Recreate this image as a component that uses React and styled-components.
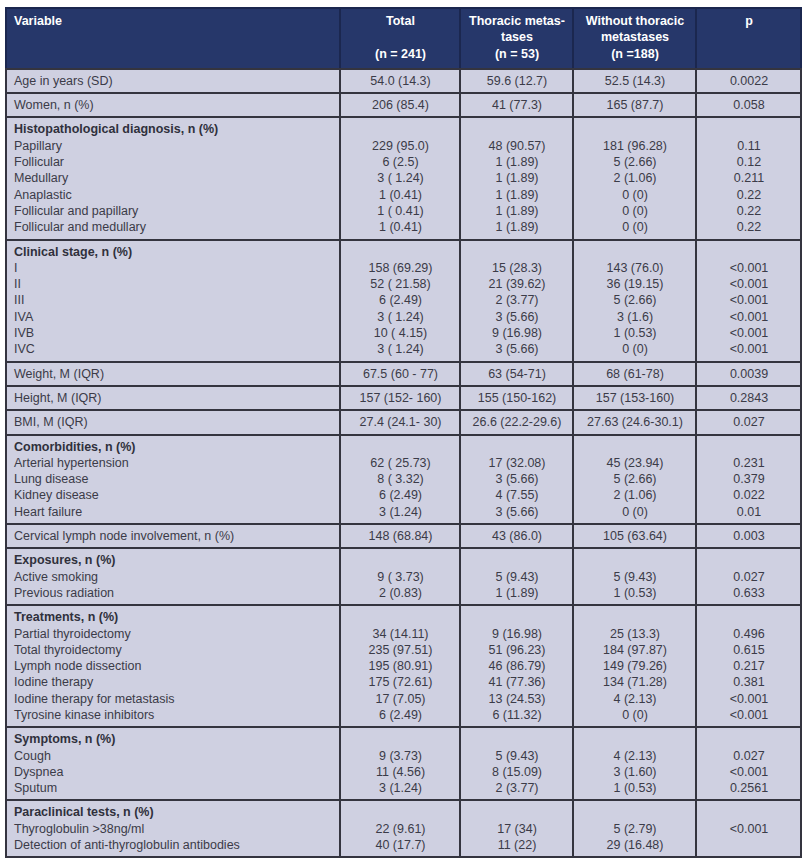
import styled, { createGlobalStyle } from 'styled-components';

const GlobalStyle = createGlobalStyle`
  body {
    margin: 0;
    padding: 7px 5px;
    background: #ffffff;
    font-family: "Liberation Sans", Arial, sans-serif;
  }
`;

const Table = styled.table`
  width: 795px;
  border-collapse: collapse;
  table-layout: fixed;
  font-size: 12.5px;
  line-height: 16.3px;
  color: #3b3b48;
  background: #cfd0e1;
  border: 2px solid #34343f;
`;

const HeadCell = styled.th`
  background: #26376a;
  color: #ffffff;
  font-weight: bold;
  text-align: ${(p) => (p.$left ? 'left' : 'center')};
  vertical-align: top;
  padding: 4px 6px 6px 7px;
  border: 2px solid #1b274f;
  border-bottom-color: #34343f;
`;

const Cell = styled.td`
  text-align: ${(p) => (p.$left ? 'left' : 'center')};
  vertical-align: top;
  padding: 3px 6px 3px 7px;
  border: 2px solid #34343f;
  white-space: nowrap;
`;

const Line = styled.div`
  min-height: 16.3px;
  font-weight: ${(p) => (p.$bold ? 'bold' : 'inherit')};
  color: ${(p) => (p.$bold ? '#30303c' : 'inherit')};
`;

const rows = [
  { label: 'Age in years (SD)', cols: [['54.0 (14.3)'], ['59.6 (12.7)'], ['52.5 (14.3)'], ['0.0022']] },
  { label: 'Women, n (%)', cols: [['206 (85.4)'], ['41 (77.3)'], ['165 (87.7)'], ['0.058']] },
  {
    heading: 'Histopathological diagnosis, n (%)',
    items: ['Papillary', 'Follicular', 'Medullary', 'Anaplastic', 'Follicular and papillary', 'Follicular and medullary'],
    cols: [
      ['229 (95.0)', '6 (2.5)', '3 ( 1.24)', '1 (0.41)', '1 ( 0.41)', '1 (0.41)'],
      ['48 (90.57)', '1 (1.89)', '1 (1.89)', '1 (1.89)', '1 (1.89)', '1 (1.89)'],
      ['181 (96.28)', '5 (2.66)', '2 (1.06)', '0 (0)', '0 (0)', '0 (0)'],
      ['0.11', '0.12', '0.211', '0.22', '0.22', '0.22'],
    ],
  },
  {
    heading: 'Clinical stage, n (%)',
    items: ['I', 'II', 'III', 'IVA', 'IVB', 'IVC'],
    cols: [
      ['158 (69.29)', '52 ( 21.58)', '6 (2.49)', '3 ( 1.24)', '10 ( 4.15)', '3 ( 1.24)'],
      ['15 (28.3)', '21 (39.62)', '2 (3.77)', '3 (5.66)', '9 (16.98)', '3 (5.66)'],
      ['143 (76.0)', '36 (19.15)', '5 (2.66)', '3 (1.6)', '1 (0.53)', '0 (0)'],
      ['<0.001', '<0.001', '<0.001', '<0.001', '<0.001', '<0.001'],
    ],
  },
  { label: 'Weight, M (IQR)', cols: [['67.5 (60 - 77)'], ['63 (54-71)'], ['68 (61-78)'], ['0.0039']] },
  { label: 'Height, M (IQR)', cols: [['157 (152- 160)'], ['155 (150-162)'], ['157 (153-160)'], ['0.2843']] },
  { label: 'BMI, M (IQR)', cols: [['27.4 (24.1- 30)'], ['26.6 (22.2-29.6)'], ['27.63 (24.6-30.1)'], ['0.027']] },
  {
    heading: 'Comorbidities, n (%)',
    items: ['Arterial hypertension', 'Lung disease', 'Kidney disease', 'Heart failure'],
    cols: [
      ['62 ( 25.73)', '8 ( 3.32)', '6 (2.49)', '3 (1.24)'],
      ['17 (32.08)', '3 (5.66)', '4 (7.55)', '3 (5.66)'],
      ['45 (23.94)', '5 (2.66)', '2 (1.06)', '0 (0)'],
      ['0.231', '0.379', '0.022', '0.01'],
    ],
  },
  { label: 'Cervical lymph node involvement, n (%)', cols: [['148 (68.84)'], ['43 (86.0)'], ['105 (63.64)'], ['0.003']] },
  {
    heading: 'Exposures, n (%)',
    items: ['Active smoking', 'Previous radiation'],
    cols: [
      ['9 ( 3.73)', '2 (0.83)'],
      ['5 (9.43)', '1 (1.89)'],
      ['5 (9.43)', '1 (0.53)'],
      ['0.027', '0.633'],
    ],
  },
  {
    heading: 'Treatments, n (%)',
    items: [
      'Partial thyroidectomy',
      'Total thyroidectomy',
      'Lymph node dissection',
      'Iodine therapy',
      'Iodine therapy for metastasis',
      'Tyrosine kinase inhibitors',
    ],
    cols: [
      ['34 (14.11)', '235 (97.51)', '195 (80.91)', '175 (72.61)', '17 (7.05)', '6 (2.49)'],
      ['9 (16.98)', '51 (96.23)', '46 (86.79)', '41 (77.36)', '13 (24.53)', '6 (11.32)'],
      ['25 (13.3)', '184 (97.87)', '149 (79.26)', '134 (71.28)', '4 (2.13)', '0 (0)'],
      ['0.496', '0.615', '0.217', '0.381', '<0.001', '<0.001'],
    ],
  },
  {
    heading: 'Symptoms, n (%)',
    items: ['Cough', 'Dyspnea', 'Sputum'],
    cols: [
      ['9 (3.73)', '11 (4.56)', '3 (1.24)'],
      ['5 (9.43)', '8 (15.09)', '2 (3.77)'],
      ['4 (2.13)', '3 (1.60)', '1 (0.53)'],
      ['0.027', '<0.001', '0.2561'],
    ],
  },
  {
    heading: 'Paraclinical tests, n (%)',
    items: ['Thyroglobulin >38ng/ml', 'Detection of anti-thyroglobulin antibodies'],
    cols: [
      ['22 (9.61)', '40 (17.7)'],
      ['17 (34)', '11 (22)'],
      ['5 (2.79)', '29 (16.48)'],
      ['<0.001'],
    ],
  },
];

const Row = ({ row }) => {
  if (!row.heading) {
    return (
      <tr>
        <Cell $left>{row.label}</Cell>
        {row.cols.map((c, i) => (
          <Cell key={i}>
            <Line>{c[0]}</Line>
          </Cell>
        ))}
      </tr>
    );
  }
  return (
    <tr>
      <Cell $left>
        <Line $bold>{row.heading}</Line>
        {row.items.map((t) => (
          <Line key={t}>{t}</Line>
        ))}
      </Cell>
      {row.cols.map((c, i) => (
        <Cell key={i}>
          <Line />
          {c.map((v, j) => (
            <Line key={j}>{v}</Line>
          ))}
        </Cell>
      ))}
    </tr>
  );
};

export default function App() {
  return (
    <>
      <GlobalStyle />
      <Table>
        <colgroup>
          <col style={{ width: 334 }} />
          <col style={{ width: 120 }} />
          <col style={{ width: 113 }} />
          <col style={{ width: 123 }} />
          <col style={{ width: 105 }} />
        </colgroup>
        <thead>
          <tr>
            <HeadCell $left>Variable</HeadCell>
            <HeadCell>
              <Line>Total</Line>
              <Line />
              <Line>(n = 241)</Line>
            </HeadCell>
            <HeadCell>
              <Line>Thoracic metas-</Line>
              <Line>tases</Line>
              <Line>(n = 53)</Line>
            </HeadCell>
            <HeadCell>
              <Line>Without thoracic</Line>
              <Line>metastases</Line>
              <Line>(n =188)</Line>
            </HeadCell>
            <HeadCell>p</HeadCell>
          </tr>
        </thead>
        <tbody>
          {rows.map((r, i) => (
            <Row key={i} row={r} />
          ))}
        </tbody>
      </Table>
    </>
  );
}
